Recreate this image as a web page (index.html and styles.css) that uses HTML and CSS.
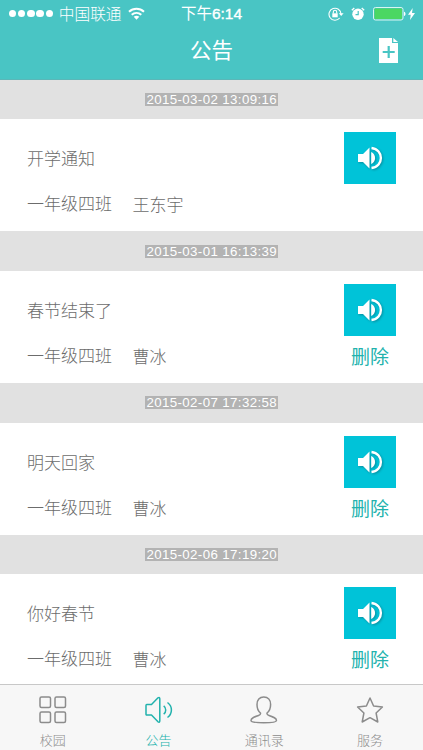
FILE: index.html
```html
<!DOCTYPE html>
<html lang="zh-CN">
<head>
<meta charset="utf-8">
<title>公告</title>
<link rel="stylesheet" href="styles.css">
</head>
<body>
<svg class="defs" width="0" height="0">
  <symbol id="speaker" viewBox="0 0 26 26">
    <path d="M1 9h5l6.500-6.500v21L6 17H1z"/>
    <path d="M14.200 7c5.200 2 5.200 10 0 12z"/>
    <path d="M14.500 3c12.500 1.500 12.500 18.500 0 20" fill="none" stroke="#fff" stroke-width="2.400"/>
  </symbol>
</svg>
<div class="app">
  <header class="header">
    <div class="status">
      <div class="status-left">
        <span class="dots"><i></i><i></i><i></i><i></i><i></i></span>
        <span class="carrier">中国联通</span>
        <svg class="wifi" width="17" height="13" viewBox="0 0 17 13" fill="none" stroke="#fff" stroke-width="2"><path d="M1 4.800c4.300-4 10.700-4 15 0M3.700 7.800c2.800-2.500 6.800-2.500 9.600 0"/><path d="M5.700 9.800c1.700-1.300 3.900-1.300 5.600 0L8.500 12.700z" fill="#fff" stroke="none"/></svg>
      </div>
      <span class="clock">下午<b>6:14</b></span>
      <div class="status-right">
        <svg class="lock" width="16" height="14" viewBox="0 0 16 14" fill="none" stroke="#fff" stroke-width="1.100"><path d="M11.700 11A6 6 0 1 1 13 7"/><path d="M10.800 6.300h4.800L13.200 9z" fill="#fff" stroke="none"/><path d="M4.300 6.300h5.400v4H4.300z" fill="#fff" stroke="none"/><path d="M5.300 6.500V5a1.700 1.700 0 0 1 3.400 0v1.500"/></svg>
        <svg class="alarm" width="14" height="14" viewBox="0 0 14 14"><circle cx="7" cy="7.300" r="5.700" fill="#fff"/><path d="M.8 3.300l2.500-2.300M13.200 3.300l-2.500-2.300" stroke="#fff" stroke-width="1.300"/><path d="M7.200 4v3.700H4.500" fill="none" stroke="#49c5c4" stroke-width="1.200"/></svg>
        <svg class="battery" width="33" height="14" viewBox="0 0 33 14"><rect x=".5" y=".5" width="29.500" height="12.500" rx="2" fill="none" stroke="#d9f5f2"/><rect x="1.500" y="1.500" width="27.500" height="10.500" rx=".8" fill="#4bd763"/><path d="M31 4.700c2 .5 2 3.800 0 4.300z" fill="#fff"/></svg>
        <svg class="bolt" width="7" height="12" viewBox="0 0 7 12"><path d="M4.700 0L0 6.700h2.700L2 12l5-7H4z" fill="#fff"/></svg>
      </div>
    </div>
    <div class="nav">
      <h1>公告</h1>
      <svg class="add" width="19" height="25" viewBox="0 0 19 25"><path d="M0 0h13v5h6v20H0z" fill="#fff"/><path d="M14.300 0L19 4h-4.700z" fill="#fff"/><path d="M9.700 8v12M3.700 14h12" stroke="#49c5c4" stroke-width="2.200"/></svg>
    </div>
  </header>

  <main class="list">
    <section class="item">
      <div class="date"><time>2015-03-02 13:09:16</time></div>
      <div class="card">
        <div class="info"><h2>开学通知</h2><p><span>一年级四班</span><span class="author">王东宇</span></p></div>
        <div class="actions"><button class="play"><svg><use href="#speaker"/></svg></button></div>
      </div>
    </section>
    <section class="item">
      <div class="date"><time>2015-03-01 16:13:39</time></div>
      <div class="card">
        <div class="info"><h2>春节结束了</h2><p><span>一年级四班</span><span class="author">曹冰</span></p></div>
        <div class="actions"><button class="play"><svg><use href="#speaker"/></svg></button><a class="delete">删除</a></div>
      </div>
    </section>
    <section class="item">
      <div class="date"><time>2015-02-07 17:32:58</time></div>
      <div class="card">
        <div class="info"><h2>明天回家</h2><p><span>一年级四班</span><span class="author">曹冰</span></p></div>
        <div class="actions"><button class="play"><svg><use href="#speaker"/></svg></button><a class="delete">删除</a></div>
      </div>
    </section>
    <section class="item">
      <div class="date"><time>2015-02-06 17:19:20</time></div>
      <div class="card">
        <div class="info"><h2>你好春节</h2><p><span>一年级四班</span><span class="author">曹冰</span></p></div>
        <div class="actions"><button class="play"><svg><use href="#speaker"/></svg></button><a class="delete">删除</a></div>
      </div>
    </section>
  </main>

  <nav class="tabs">
    <a class="tab"><svg width="28" height="28" viewBox="0 0 28 28"><rect x="1" y="1" width="10.500" height="10.500" rx="1.500"/><rect x="16" y="1" width="10.500" height="10.500" rx="1.500"/><rect x="1" y="16" width="10.500" height="10.500" rx="1.500"/><rect x="16" y="16" width="10.500" height="10.500" rx="1.500"/></svg><span>校园</span></a>
    <a class="tab active"><svg width="28" height="28" viewBox="0 0 28 28"><path d="M1.700 8.500h4.800l6.500-6.700q1.800-1 1.800 1v22q0 2-1.800 1l-6.500-6.700H1.700q-.7 0-.7-1v-8.600q0-1 .7-1zM18.700 9.800c2.700 2 2.700 6.400 0 8.400M22.500 6.500c5.200 3.800 5.200 11.200 0 15"/></svg><span>公告</span></a>
    <a class="tab"><svg width="28" height="28" viewBox="0 0 28 28"><path d="M13.800 1C9.500 1 7 4 7 8.500c0 4 1.500 7 3.500 8.500.3 1.500-.5 2-2 2.500C4 21 1 22 1 24.500c0 3 25.500 3 25.500 0 0-2.500-3-3.500-7.500-5-1.500-.5-2.300-1-2-2.500 2-1.500 3.600-4.500 3.600-8.500C20.600 4 18 1 13.800 1z"/></svg><span>通讯录</span></a>
    <a class="tab"><svg width="28" height="28" viewBox="0 0 28 28"><path d="M14 2l3.600 8 8.800 1-6.300 6 1.700 9-7.800-4.300L6.200 26l1.700-9-6.300-6 8.800-1z"/></svg><span>服务</span></a>
  </nav>
</div>
</body>
</html>
```
FILE: styles.css
```css
* { box-sizing: border-box; margin: 0; padding: 0; }
body {
  width: 423px;
  height: 750px;
  overflow: hidden;
  background: #fff;
  font-family: "Liberation Sans", "Noto Sans CJK SC", sans-serif;
  font-weight: 300;
}
svg { display: block; flex: none; }
.defs { position: absolute; }
.app { height: 750px; display: flex; flex-direction: column; }

.header { flex: none; height: 79.500px; background: #49c5c4; border-bottom: 1px solid #5bb7b8; color: #fff; }
.status { height: 27px; display: grid; grid-template-columns: 1fr auto 1fr; align-items: center; }
.status-left { display: flex; align-items: center; padding-left: 8.500px; }
.dots { display: flex; gap: 1.600px; }
.dots i { width: 7.700px; height: 7.700px; border-radius: 50%; background: #fff; }
.carrier { margin-left: 5.500px; font: 300 15.700px/27px "Noto Sans CJK SC", sans-serif; }
.wifi { margin-left: 6px; }
.clock { font: 400 15.500px/27px "Liberation Sans", "Noto Sans CJK SC", sans-serif; }
.clock b { font-weight: 400; -webkit-text-stroke: .4px #fff; }
.status-right { display: flex; align-items: center; justify-content: flex-end; padding-right: 8px; }
.lock { margin-right: 1px; }
.alarm { margin-left: 6px; }
.battery { margin-left: 7.500px; }
.bolt { margin-left: 2.500px; }
.nav { height: 46px; display: grid; grid-template-columns: 1fr auto 1fr; align-items: center; }
.nav h1 { grid-column: 2; padding-bottom: 2px; font: 400 21.500px/42px "Noto Sans CJK SC", sans-serif; }
.add { justify-self: end; margin-right: 25px; }

.list { flex: 1; min-height: 0; overflow: hidden; }
.item { height: 151.750px; }
.date { height: 39.500px; display: flex; justify-content: center; align-items: center; background: #e1e1e1; }
.date time { height: 13px; padding: 0 .5px 0 1px; background: #b3b3b3; color: #fff; font-size: 13.300px; line-height: 13.500px; letter-spacing: .38px; white-space: nowrap; }
.card { height: 112.250px; display: flex; justify-content: space-between; padding: 13px 27px 0; color: #6c6c6c; font-family: "Noto Sans CJK SC", sans-serif; font-size: 17px; }
.info { padding-top: 13px; }
.info h2 { font-size: 17px; font-weight: 300; line-height: 26px; }
.info p { display: flex; gap: 20.500px; margin-top: 19px; line-height: 26px; }
.author { padding-top: 1px; }
.actions { width: 52px; text-align: center; }
.play { display: flex; align-items: center; justify-content: center; width: 52px; height: 52px; border: 0; background: #00c3d8; }
.play svg { width: 26px; height: 26px; fill: #fff; filter: drop-shadow(1px 1px 1px #078c9d); }
.delete { display: block; margin-top: 5px; color: #22b2ad; font-size: 19px; font-weight: 400; line-height: 30px; }

.tabs { flex: none; height: 66px; display: grid; grid-template-columns: repeat(4, 1fr); border-top: 1.500px solid #c8c8c8; background: #f7f7f7; color: #8c8c8c; font-family: "Noto Sans CJK SC", sans-serif; }
.tab { display: flex; flex-direction: column; align-items: center; padding-top: 11px; font-size: 13px; line-height: 20px; }
.tab svg { fill: none; stroke: currentColor; stroke-width: 1.500; stroke-linejoin: round; }
.tab span { margin-top: 6px; }
.active { color: #22b2ad; }
```
